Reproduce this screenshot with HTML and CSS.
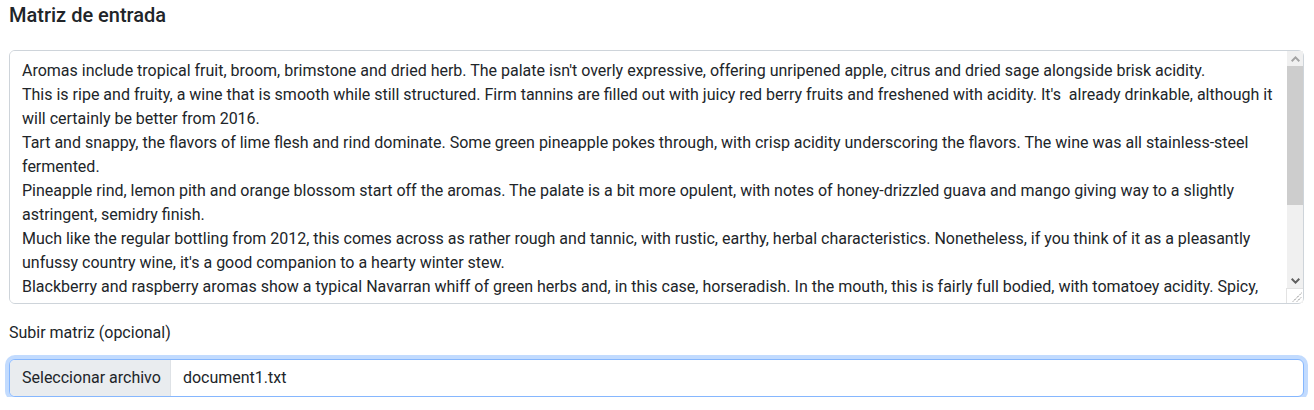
FILE: index.html
```html
<!DOCTYPE html>
<html lang="es">
<head>
<meta charset="utf-8">
<title>Matriz de entrada</title>
<link rel="stylesheet" href="styles.css">
</head>
<body>
<main class="page">
  <h5 class="title">Matriz de entrada</h5>
  <div class="scroll-wrap">
    <textarea class="matrix" spellcheck="false">Aromas include tropical fruit, broom, brimstone and dried herb. The palate isn't overly expressive, offering unripened apple, citrus and dried sage alongside brisk acidity.
This is ripe and fruity, a wine that is smooth while still structured. Firm tannins are filled out with juicy red berry fruits and freshened with acidity. It's  already drinkable, although it will certainly be better from 2016.
Tart and snappy, the flavors of lime flesh and rind dominate. Some green pineapple pokes through, with crisp acidity underscoring the flavors. The wine was all stainless-steel fermented.
Pineapple rind, lemon pith and orange blossom start off the aromas. The palate is a bit more opulent, with notes of honey-drizzled guava and mango giving way to a slightly astringent, semidry finish.
Much like the regular bottling from 2012, this comes across as rather rough and tannic, with rustic, earthy, herbal characteristics. Nonetheless, if you think of it as a pleasantly unfussy country wine, it's a good companion to a hearty winter stew.
Blackberry and raspberry aromas show a typical Navarran whiff of green herbs and, in this case, horseradish. In the mouth, this is fairly full bodied, with tomatoey acidity. Spicy, herbal flavors complement dark plum fruit, while the finish is fresh but grabby.
Here's a bright, informal red that opens with aromas of candied berry, white pepper and savory herb that carry over to the palate. It's balanced with fresh acidity and soft tannins.
This dry and restrained wine offers spice in profusion. Balanced with acidity and a firm texture, it's very much for food.
Savory dried thyme notes accent sunnier flavors of preserved peach in this brisk, off-dry wine. It's fruity and fresh, with an elegant, sprightly footprint.</textarea>
    <div class="vscroll" aria-hidden="true">
      <div class="sb-btn">
        <svg width="9" height="6" viewBox="0 0 9 6"><path d="M0.7 5.2 L4.5 1.4 L8.3 5.2" fill="none" stroke="#a3a3a3" stroke-width="2"/></svg>
      </div>
      <div class="sb-thumb"></div>
      <div class="sb-track"></div>
      <div class="sb-btn">
        <svg width="9" height="6" viewBox="0 0 9 6"><path d="M0.7 0.8 L4.5 4.6 L8.3 0.8" fill="none" stroke="#5f5f5f" stroke-width="2"/></svg>
      </div>
      <div class="sb-corner">
        <svg width="14" height="14" viewBox="0 0 14 14"><path d="M4 12.5 L12.5 4 M8 12.5 L12.5 8" fill="none" stroke="#6f6f6f" stroke-width="1" stroke-dasharray="1.2 1"/></svg>
      </div>
    </div>
  </div>
  <label class="label">Subir matriz (opcional)</label>
  <div class="file">
    <span class="file-btn">Seleccionar archivo</span>
    <span class="file-name">document1.txt</span>
  </div>
</main>
</body>
</html>
```
FILE: styles.css
```css
html, body {
  margin: 0;
  padding: 0;
  background: #fff;
}
body {
  font-family: Roboto, "Liberation Sans", sans-serif;
  font-size: 16px;
  line-height: 24px;
  color: #212529;
}
.page {
  display: flex;
  flex-direction: column;
  padding: 0 10px 0 9px;
}
.title {
  margin: 3px 0 23px;
  font-size: 20px;
  line-height: 24px;
  font-weight: 500;
}
.scroll-wrap {
  position: relative;
}
.matrix {
  display: block;
  box-sizing: border-box;
  width: 100%;
  height: 254px;
  margin: 0;
  padding: 8px 28px 6px 12px;
  border: 1px solid #ced4da;
  border-radius: 6px;
  font-family: inherit;
  font-size: 16px;
  line-height: 24px;
  color: #212529;
  background: #fff;
  overflow-y: scroll;
  resize: none;
  outline: none;
}
.matrix::-webkit-scrollbar {
  display: none;
}
.vscroll {
  position: absolute;
  top: 1px;
  right: 1px;
  bottom: 1px;
  width: 16px;
  display: flex;
  flex-direction: column;
  background: #f0f0f0;
}
.sb-btn {
  height: 15px;
  display: flex;
  align-items: center;
  justify-content: center;
  flex: none;
}
.sb-thumb {
  height: 139px;
  background: #cdcdcd;
  flex: none;
}
.sb-track {
  flex: 1;
}
.sb-corner {
  height: 14px;
  flex: none;
  background: #fff;
  border-top: 1px solid #e3e3e3;
  border-left: 1px solid #e3e3e3;
  margin-left: -1px;
  border-bottom-right-radius: 5px;
  display: flex;
  align-items: flex-end;
  justify-content: flex-end;
}
.sb-corner svg {
  display: block;
}
.label {
  display: block;
  margin: 17px 0 14px;
  line-height: 24px;
}
.file {
  display: flex;
  box-sizing: border-box;
  height: 38px;
  border: 1px solid #86b7fe;
  border-radius: 6px;
  box-shadow: 0 0 0 4px rgba(13, 110, 253, 0.25);
  overflow: hidden;
  background: #fff;
}
.file-btn {
  padding: 6px 9px 6px 12px;
  background: #e9ecef;
  border-right: 1px solid #dee2e6;
  white-space: nowrap;
}
.file-name {
  padding: 6px 12px;
  white-space: nowrap;
}
```
